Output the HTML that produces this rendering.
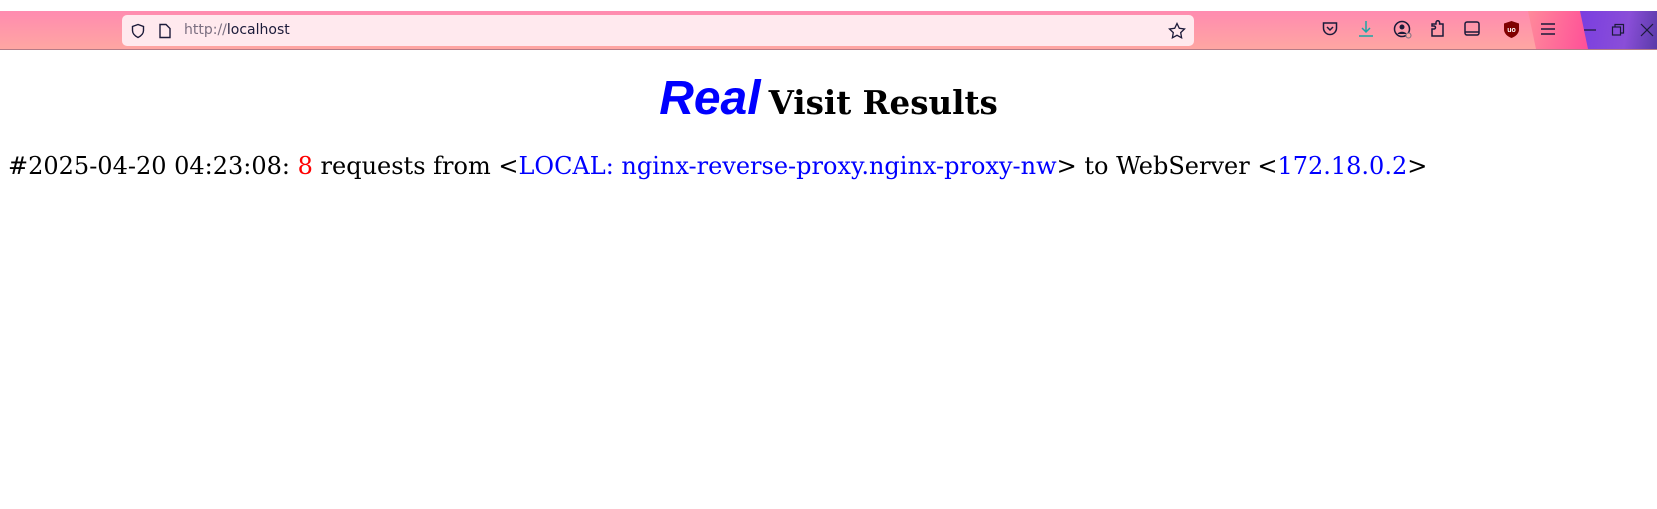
<!DOCTYPE html>
<html><head><meta charset="utf-8"><style>
html,body{margin:0;padding:0;background:#fff;width:1657px;height:509px;overflow:hidden}
.bar{position:absolute;left:0;top:11px;width:1657px;height:38px;background:linear-gradient(180deg,#ff8bb0,#ffa6a2);border-bottom:1px solid #b57a86}
.pinkstrip{position:absolute;left:1528px;top:0;width:60px;height:38px;background:linear-gradient(100deg,#ff8a9a,#ff4f98);clip-path:polygon(0 0,100% 0,100% 100%,8px 100%)}
.purple{position:absolute;left:1580px;top:0;width:77px;height:38px;background:linear-gradient(100deg,#7a3ee0,#8a4ed8 60%,#5a3aa8);clip-path:polygon(0 0,100% 0,100% 100%,8px 100%)}
.url{position:absolute;left:122px;top:4px;width:1072px;height:31px;background:#ffe9ee;border-radius:5px}
.url span{position:absolute;left:62px;top:7px;font:14px "DejaVu Sans",sans-serif;color:#1c1b3a}
.ic{position:absolute;top:9px}
h1{position:absolute;top:71px;left:0;width:1657px;text-align:center;margin:0;line-height:56px;white-space:nowrap}
.r{font:italic bold 48px "Liberation Sans",sans-serif;color:#00f}
.v{font:bold 32.5px "DejaVu Serif",serif;color:#000}
p{position:absolute;left:8px;top:150px;margin:0;font:24px "DejaVu Serif",serif;white-space:nowrap;line-height:32px}
.b{color:#00f}.red{color:red}
</style></head><body>
<div class="bar">
 <div class="url">
  <svg class="ic" style="left:8px;top:8px" width="16" height="16" viewBox="0 0 16 16"><path d="M8 1.5L2.5 3.5v4c0 3.5 2.5 5.5 5.5 7 3-1.5 5.5-3.5 5.5-7v-4z" fill="none" stroke="#1c1b3a" stroke-width="1.4"/></svg>
  <svg class="ic" style="left:36px;top:8px" width="14" height="16" viewBox="0 0 14 16"><path d="M2 1.5h6l4 4v9H2z" fill="none" stroke="#1c1b3a" stroke-width="1.4"/></svg>
  <span><span style="position:static;color:#7a6e80">http://</span>localhost</span>
  <svg class="ic" style="left:1046px;top:7px" width="18" height="18" viewBox="0 0 18 18"><path d="M9 1.5l2.3 4.8 5.2.7-3.8 3.6.9 5.2L9 13.3l-4.6 2.5.9-5.2L1.5 7l5.2-.7z" fill="none" stroke="#1c1b3a" stroke-width="1.3"/></svg>
 </div>
 <svg class="ic" style="left:1321px" width="18" height="18" viewBox="0 0 18 18"><path d="M2.5 3h13v5a6.5 6.5 0 0 1-13 0z" fill="none" stroke="#1c1b3a" stroke-width="1.5"/><path d="M6 7l3 3 3-3" fill="none" stroke="#1c1b3a" stroke-width="1.5"/></svg>
 <svg class="ic" style="left:1357px" width="18" height="18" viewBox="0 0 18 18"><path d="M9 1v11M5 8l4 4 4-4M2 16h14" fill="none" stroke="#1aa6a6" stroke-width="1.5"/></svg>
 <svg class="ic" style="left:1393px" width="20" height="20" viewBox="0 0 20 20"><circle cx="9" cy="9" r="7.5" fill="none" stroke="#1c1b3a" stroke-width="1.5"/><circle cx="9" cy="7" r="2.5" fill="#1c1b3a"/><path d="M4.5 14c1-3 8-3 9 0" fill="#1c1b3a"/><circle cx="15.5" cy="15.5" r="2.5" fill="#ffa6a2" stroke="#7a6e80" stroke-width="1"/></svg>
 <svg class="ic" style="left:1429px" width="18" height="18" viewBox="0 0 18 18"><path d="M3 16V9h2a1.5 1.5 0 0 0 0-3H3V4h4V2.5a1.8 1.8 0 0 1 3.6 0V4H14v12z" fill="none" stroke="#1c1b3a" stroke-width="1.5"/></svg>
 <svg class="ic" style="left:1463px" width="18" height="18" viewBox="0 0 18 18"><rect x="2" y="2" width="14" height="13" rx="2" fill="none" stroke="#1c1b3a" stroke-width="1.5"/><path d="M2 12h14" stroke="#1c1b3a" stroke-width="1.5"/></svg>
 <svg class="ic" style="left:1503px" width="17" height="19" viewBox="0 0 17 19"><path d="M8.5 1L1 3.5v6c0 4 3.5 7 7.5 8.5 4-1.5 7.5-4.5 7.5-8.5v-6z" fill="#800000"/><text x="8.5" y="12" font-size="7" font-family="Liberation Sans" font-weight="bold" fill="#fff" text-anchor="middle">uo</text></svg>
 <div class="pinkstrip"></div>
 <svg class="ic" style="left:1540px;top:11px" width="16" height="14" viewBox="0 0 16 14"><path d="M1 2h14M1 7h14M1 12h14" stroke="#1c1b3a" stroke-width="1.5"/></svg>
 <div class="purple">
  <svg style="position:absolute;left:3px;top:12px" width="14" height="14"><path d="M1 7h12" stroke="#1c1b3a" stroke-width="1.2"/></svg>
  <svg style="position:absolute;left:31px;top:12px" width="14" height="14"><rect x="1.5" y="4" width="8" height="8" fill="none" stroke="#1c1b3a" stroke-width="1.2"/><path d="M4 4V1.5h8.5V10H9.5" fill="none" stroke="#1c1b3a" stroke-width="1.2"/></svg>
  <svg style="position:absolute;left:60px;top:12px" width="14" height="14"><path d="M1 1l12 12M13 1L1 13" stroke="#1c1b3a" stroke-width="1.2"/></svg>
 </div>
</div>
<h1><span class="r">Real</span> <span class="v">Visit Results</span></h1>
<p>#2025-04-20 04:23:08: <span class="red">8</span> requests from &lt;<span class="b">LOCAL: nginx-reverse-proxy.nginx-proxy-nw</span>&gt; to WebServer &lt;<span class="b">172.18.0.2</span>&gt;</p>
</body></html>
